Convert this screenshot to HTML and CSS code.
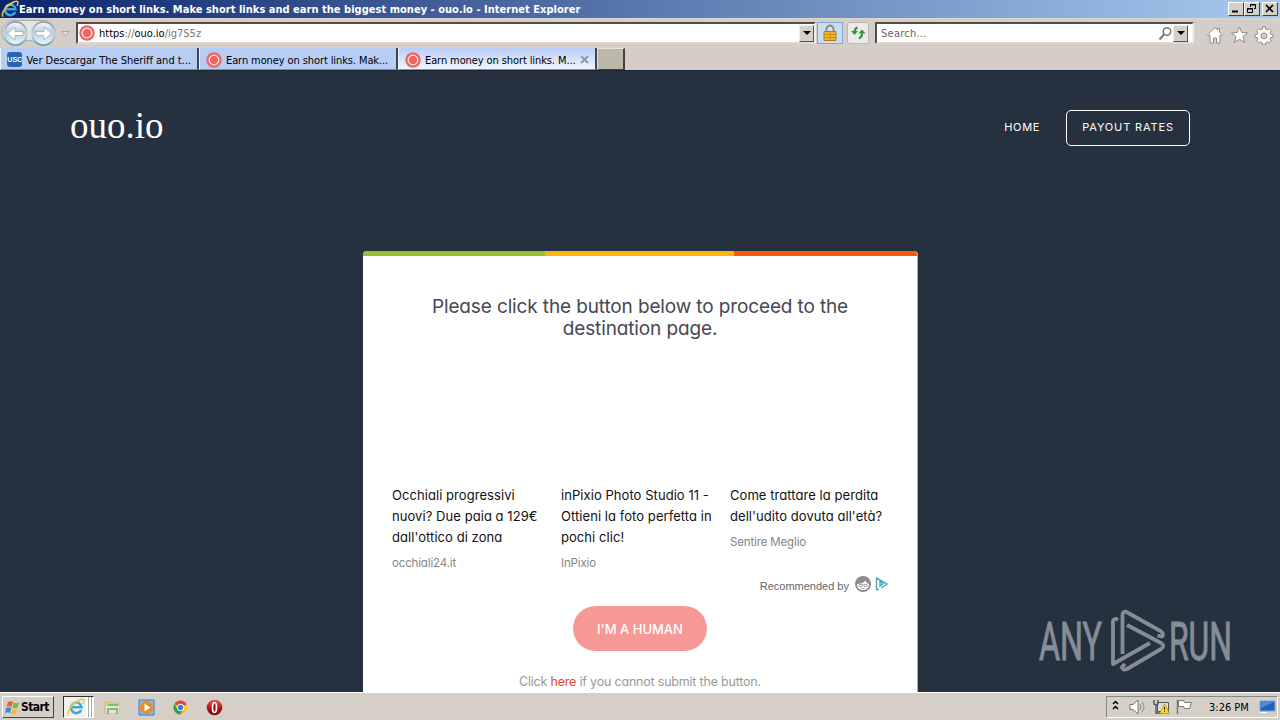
FILE: index.html
```html
<!DOCTYPE html>
<html lang="en">
<head>
    <meta charset="utf-8">
    <meta name="viewport" content="width=device-width, initial-scale=1.0">
    <title>Earn money on short links. Make short links and earn the biggest money - ouo.io</title>
    <link rel="stylesheet" href="styles.css">
</head>
<body>
    <svg width="0" height="0" class="defs">
        <defs>
            <linearGradient id="ring" x2="0" y2="1"><stop stop-color="#8295a6"/><stop offset=".5" stop-color="#c8d4dc"/><stop offset="1" stop-color="#58a5b5"/></linearGradient>
            <linearGradient id="disc" x2="0" y2="1"><stop stop-color="#f8fafc"/><stop offset=".45" stop-color="#bdcad8"/><stop offset="1" stop-color="#eefafe"/></linearGradient>
            <linearGradient id="red" x2="0" y2="1"><stop stop-color="#e55b57"/><stop offset=".5" stop-color="#bb1717"/><stop offset="1" stop-color="#780609"/></linearGradient>
            <symbol id="ie" viewBox="0 0 18 18">
                <path d="M14.200 12A5.300 5.300 0 1 1 14.600 9.300H5.500" fill="none" stroke="#3ba7e2" stroke-width="2.500"/>
                <path d="M4.500 6.500Q7 3.500 11 5" fill="none" stroke="#a5e3fa" stroke-width="1"/>
                <path d="M2.200 16.500C-1 15 4.800 5.500 12.600 2c4.700-2 5.300.5 3.300 4" fill="none" stroke="#efc734" stroke-width="1.500"/>
            </symbol>
            <symbol id="ouo" viewBox="0 0 16 16">
                <circle cx="8" cy="8" r="7.700" fill="#ed6461"/>
                <circle cx="8" cy="8" r="4.800" fill="#ed6461" stroke="#ffe9e5" stroke-width="1.300"/>
            </symbol>
        </defs>
    </svg>

    <div class="titlebar">
        <svg class="title-icon" width="18" height="18"><use href="#ie"/></svg>
        <span class="title-text">Earn money on short links. Make short links and earn the biggest money - ouo.io - Internet Explorer</span>
        <div class="win-btns">
            <span class="win-btn"><svg width="13" height="11"><path d="M3 8.500h6" stroke="#000" stroke-width="2"/></svg></span>
            <span class="win-btn"><svg width="13" height="11"><path d="M5.500 4V1.500h5v4H9M5 2h6M2.500 5.500h5v4h-5zM2 6h6" fill="none" stroke="#000"/></svg></span>
            <span class="win-btn close"><svg width="13" height="11"><path d="M3 2l7 7M10 2L3 9" stroke="#000" stroke-width="1.700"/></svg></span>
        </div>
    </div>

    <div class="navbar">
        <svg class="history" width="72" height="29">
            <path d="M15 1.500h28c10 0 16 11 9 21-5 5-12 5-17 1-4-3-8-3-12 0C13 29 2 24 2 13 2 7 8 1.500 15 1.500" fill="#e2e4e5" stroke="#aaa9ad"/>
            <circle cx="15.500" cy="14.500" r="11.500" fill="url(#disc)" stroke="url(#ring)" stroke-width="1.600"/>
            <circle cx="43.500" cy="14.500" r="11.500" fill="url(#disc)" stroke="url(#ring)" stroke-width="1.600"/>
            <path d="M7.500 14.500l7.500-6.500v4.500h8v4h-8V21zM51.500 14.500L44 8v4.500h-8v4h8V21z" fill="#fff" stroke="#a1adbb" stroke-width=".8"/>
            <path d="M61.500 12.500h8l-4 4z" fill="#e5e0db" stroke="#aaa6a2"/>
        </svg>
        <div class="field address">
            <svg width="16" height="16"><use href="#ouo"/></svg>
            <span class="url">https<i>://</i>ouo.io<i>/ig7S5z</i></span>
            <span class="drop"></span>
        </div>
        <span class="tool lock">
            <svg width="16" height="18"><path d="M4.500 8V5a3.500 3.500 0 0 1 7 0v3" fill="none" stroke="#94866c" stroke-width="1.800"/><path d="M2 7.500h12v9H2z" fill="#efb82b" stroke="#b57b16"/><path d="M2 10.500h12M2 13.500h12M8 8v8" stroke="#cc8d17"/></svg>
        </span>
        <span class="tool refresh">
            <svg width="16" height="16"><path d="M7.500 2.500Q4.500 3.500 4.500 7M9 13.500q3-1 3-5" fill="none" stroke="#2c9637" stroke-width="2"/><path d="M1 6h7l-3.500 4zM8.500 8.500h7L12 4.500z" fill="#2c9637"/></svg>
        </span>
        <div class="field search">
            <span>Search...</span>
            <svg width="15" height="15"><circle cx="9" cy="5.500" r="3.800" fill="none" stroke="#777" stroke-width="1.500"/><path d="M6 8.500l-4.500 5" stroke="#777" stroke-width="2"/></svg>
            <span class="drop"></span>
        </div>
        <svg class="browser-tools" width="68" height="20">
            <g fill="#fff" stroke="#8b8b8b">
                <path d="M1.500 10L9 2.500l2.500 2.500V3.500h2v3.500l3 3-1 1-1.500-1v8h-3.500v-5h-3v5H4v-8l-1.500 1z"/>
                <path d="M33.500 2l2.300 5.500 5.700.3-4.500 3.800 1.700 6-5.200-3.400-5.200 3.400 1.700-6-4.500-3.800 5.700-.3z"/>
                <path d="M56.700 2h2.600l.5 2.200 1.500.7 2-1.200 1.900 1.900-1.200 2 .7 1.500 2.200.5v2.600l-2.200.5-.7 1.500 1.200 2-1.900 1.900-2-1.200-1.500.7-.5 2.200h-2.600l-.5-2.200-1.500-.7-2 1.200-1.900-1.900 1.200-2-.7-1.500-2.200-.5V9.600l2.200-.5.7-1.500-1.200-2 1.900-1.900 2 1.200 1.500-.7z"/>
            </g>
            <circle cx="58" cy="10.900" r="3" fill="#d4d0c8" stroke="#8b8b8b"/>
        </svg>
    </div>

    <div class="tabs">
        <div class="tab"><span class="usc">USC</span><span class="tab-text wide">Ver Descargar The Sheriff and t...</span></div>
        <div class="tab"><svg width="16" height="16"><use href="#ouo"/></svg><span class="tab-text">Earn money on short links. Mak...</span></div>
        <div class="tab active"><svg width="16" height="16"><use href="#ouo"/></svg><span class="tab-text">Earn money on short links. M...</span><svg class="tab-close" width="9" height="9"><path d="M1 1l7 7M8 1L1 8" stroke="#8c98b0" stroke-width="2"/></svg></div>
        <div class="new-tab"></div>
    </div>

    <main class="page">
        <header class="site-header">
            <a class="logo">ouo.io</a>
            <nav>
                <a class="home">HOME</a>
                <a class="rates">PAYOUT RATES</a>
            </nav>
        </header>

        <section class="card">
            <div class="stripes"><span></span><span></span><span></span></div>
            <h1>Please click the button below to proceed to the<br>destination page.</h1>
            <div class="ads">
                <div class="ad">
                    <p>Occhiali progressivi<br>nuovi? Due paia a 129€<br>dall'ottico di zona</p>
                    <small>occhiali24.it</small>
                </div>
                <div class="ad">
                    <p>inPixio Photo Studio 11 -<br>Ottieni la foto perfetta in<br>pochi clic!</p>
                    <small>InPixio</small>
                </div>
                <div class="ad">
                    <p>Come trattare la perdita<br>dell'udito dovuta all'età?</p>
                    <small>Sentire Meglio</small>
                </div>
            </div>
            <div class="recommended">
                <span>Recommended by</span>
                <svg width="34" height="18">
                    <circle cx="9" cy="9" r="8" fill="#8c8c8c"/>
                    <path d="M3 9C7 9 10 7.500 11.500 5.500 12 7.500 13 8.500 15 9c0 4-2.800 6-6 6s-6-2-6-6" fill="#fff"/>
                    <path d="M5 9.500h3v2H5zM10 9.500h3v2h-3zM8 10h2M7 13q2 1.300 4 0" fill="none" stroke="#999" stroke-width=".8"/>
                    <path d="M27 13l6-4-10.500-6v11.500H25M26 6.500v4.500l3-2.200z" fill="none" stroke="#47a9bd" stroke-width="1.400"/>
                </svg>
            </div>
            <button class="human">I'M A HUMAN</button>
            <p class="fallback">Click <a>here</a> if you cannot submit the button.</p>
        </section>

        <svg class="watermark" width="244" height="85">
            <g fill="#aeb5bd" stroke="#aeb5bd" stroke-width="1">
                <text x="3" y="54" textLength="63" lengthAdjust="spacingAndGlyphs">ANY</text>
                <text x="133" y="54" textLength="63" lengthAdjust="spacingAndGlyphs">RUN</text>
            </g>
            <g fill="none" stroke="#aeb5bd" stroke-width="3.800" stroke-linejoin="round">
                <path d="M82 14c-3-2-5-1-5 2v42l37-21"/>
                <path d="M86.500 48V9c0-3 2-4 4-3l34 19c3 2 3 5 1 5.500l-4-1"/>
                <path d="M91 19l34 18c3 2 3 4 0 6L91 63c-3 1.500-5 0-5-2l3-3"/>
            </g>
        </svg>
    </main>

    <footer class="taskbar">
        <div class="start">
            <svg width="15" height="15"><path d="M3 2q2.500-1.500 5 0L6.500 7q-2.500-1.300-5 0z" fill="#e9612b"/><path d="M9 2.500q2.500 1.300 5 0L12.500 7.500q-2.500 1.300-5 0z" fill="#77b941"/><path d="M1.200 8q2.500-1.500 5 0L5 13q-2.500-1.300-5 0z" fill="#3c8bd2"/><path d="M7.200 8.500q2.500 1.300 5 0L11 13.500q-2.500 1.300-5 0z" fill="#f4be2d"/></svg>
            <span>Start</span>
        </div>
        <div class="task-ie"><svg width="18" height="18"><use href="#ie"/></svg></div>
        <div class="quick">
            <svg width="17" height="17"><path d="M1 3h5l1 1h8v10H1z" fill="#eecf6d" stroke="#d1b25c" stroke-width=".7"/><path d="M4 5h10v4H4z" fill="#78bf77"/><path d="M2 7h13v7H2z" fill="#f7e6a5"/><path d="M4 15v-5h9v5" fill="none" stroke="#69b8d5" stroke-width="2"/></svg>
            <svg width="17" height="17"><path d="M1 1h15v15H1z" fill="#8cbae5" stroke="#3f80c1"/><circle cx="8.500" cy="8.500" r="6.500" fill="#f18a1c"/><path d="M6.500 4.500v8l6-4z" fill="#fff"/></svg>
            <svg width="17" height="17"><circle cx="8.500" cy="8.500" r="6.800" fill="#fbc62c"/><path d="M8.500 8.500L2.400 5a7 7 0 0 1 12.300.3z" fill="#dd4837"/><path d="M2.400 5a7 7 0 0 0 6 10.500l3-5.500h-6z" fill="#2da04e"/><circle cx="8.500" cy="8.500" r="3.300" fill="#3c7ed6" stroke="#fff"/></svg>
            <svg width="17" height="17"><circle cx="8.500" cy="8.500" r="7.800" fill="url(#red)"/><ellipse cx="8.500" cy="8.500" rx="2" ry="5" fill="#961014" stroke="#fff" stroke-width="1.700"/></svg>
        </div>
        <div class="tray">
            <svg width="82" height="20">
                <path d="M2 7l2.500-2.500L7 7M2 12l2.500-2.500L7 12" fill="none" stroke="#000" stroke-width="1.500"/>
                <path d="M19 7.500h3l5-4.500v14l-5-4.500h-3z" fill="#fff" stroke="#777"/>
                <path d="M29 7q2 3 0 6M31 5q4 5 0 10" fill="none" stroke="#888"/>
                <path d="M46.500 5.500h11v9h-11z" fill="#ddd" stroke="#555"/>
                <path d="M43 3v4q2 2 4 0V3M45 8v8h6" fill="none" stroke="#555" stroke-width="1.400"/>
                <path d="M53.500 7l5 9.500h-10z" fill="#ffdc28" stroke="#a8820e" stroke-width=".7"/><path d="M53.500 10v3m0 1v1" stroke="#222"/>
                <path d="M66.500 3v14" stroke="#777" stroke-width="1.500"/><path d="M67.500 3.500h5l1 2h7l-2 6h-5l-1-2h-5z" fill="#fff" stroke="#777"/>
            </svg>
            <span class="clock">3:26 PM</span>
            <svg width="17" height="16"><path d="M1 2h15v10H1z" fill="#2262b7" stroke="#76aaeb"/><path d="M2 3h13L2 9z" fill="#4d8bd7"/><path d="M1 13.500h7" stroke="#fff"/></svg>
        </div>
    </footer>
</body>
</html>
```
FILE: styles.css
```css
* {
    margin: 0;
    padding: 0;
    box-sizing: border-box;
}

:root {
    --chrome: #d4d0c8;
    --page: #25313f;
    --ui: "DejaVu Sans Condensed", "DejaVu Sans", sans-serif;
}

body {
    width: 1280px;
    height: 720px;
    display: flex;
    flex-direction: column;
    overflow: hidden;
    background: var(--chrome);
    font-family: var(--ui);
    font-size: 11px;
    font-stretch: condensed;
}

svg {
    flex-shrink: 0;
}

.defs {
    position: absolute;
}

.titlebar {
    height: 18px;
    display: flex;
    align-items: center;
    padding: 0 2px 0 1px;
    background: linear-gradient(90deg, #0c256b, #a6caf0);
    color: #fff;
    font-weight: bold;
}

.title-text {
    flex: 1;
    white-space: nowrap;
    letter-spacing: 0.025px;
}

.win-btns {
    display: flex;
}

.win-btn {
    width: 16px;
    height: 14px;
    background: var(--chrome);
    border: 1px solid;
    border-color: #fff #404040 #404040 #fff;
    display: flex;
}

.close {
    margin-left: 2px;
}

.navbar {
    height: 30px;
    display: flex;
    align-items: flex-start;
    padding: 0 6px 0 0;
    background: #d5cec8;
    border-top: 1px solid #dbd9cf;
}

.history {
    margin-right: 4px;
}

.field {
    height: 22px;
    margin-top: 3px;
    background: #fff;
    border: 2px solid;
    border-color: #544c47 #eee #e1d5d1 #544c47;
    display: flex;
    align-items: center;
}

.address {
    width: 740px;
    padding-left: 1px;
}

.url {
    flex: 1;
    margin: 1px 0 0 4px;
}

.url i {
    font-style: normal;
    color: #777;
}

.drop {
    width: 15px;
    height: 17px;
    background: var(--chrome);
    border: 1px solid;
    border-color: #eee #555 #555 #eee;
    display: flex;
    align-items: center;
    justify-content: center;
}

.drop::before {
    content: "";
    border: 4px solid transparent;
    border-top-color: #000;
    border-bottom: 0;
}

.tool {
    width: 26px;
    height: 22px;
    margin: 3px 0 0 1px;
    display: flex;
    align-items: center;
    justify-content: center;
}

.lock {
    background: #c9def5;
    border: 1px solid #79a8e0;
}

.refresh {
    width: 22px;
    margin-left: 4px;
    background: #ecebe9;
    border: 1px solid #bab8b6;
    border-radius: 3px;
}

.search {
    width: 319px;
    margin-left: 6px;
    padding: 0 4px 0 4px;
    color: #666;
}

.search span:first-child {
    flex: 1;
    margin-top: 1px;
    letter-spacing: 0.25px;
}

.browser-tools {
    margin: 6px 0 0 12px;
}

.tabs {
    height: 23px;
    display: flex;
    align-items: flex-start;
    background: #d5cec8;
    border-bottom: 1px solid #192432;
}

.tab {
    width: 199px;
    height: 22px;
    padding: 2px 6px 0;
    display: flex;
    align-items: center;
    background: #b8cdf4;
    border-left: 1px solid #edf3fc;
    border-right: 2px solid #3e4350;
    border-bottom: 1px solid #8790a1;
}

.active {
    background: linear-gradient(#b9cdf8, #f0f5ff);
}

.tab-text {
    margin: 1px 0 0 4px;
    white-space: nowrap;
    letter-spacing: -0.1px;
}

.tab-text.wide {
    letter-spacing: -0.02px;
}

.tab-close {
    margin-left: auto;
}

.usc {
    width: 16px;
    height: 15px;
    border-radius: 3px;
    background: #2766b4;
    color: #fff;
    font: bold 7px/15px "Liberation Sans", sans-serif;
    text-align: center;
}

.new-tab {
    width: 28px;
    height: 22px;
    background: #bbb7aa;
    border: 1px solid #e7e3db;
    border-right: 2px solid #45413d;
    border-bottom-color: #47433f;
}

.page {
    height: 621px;
    position: relative;
    overflow: hidden;
    background: var(--page);
    font-family: Inter, sans-serif;
    font-feature-settings: "cv11";
    font-stretch: normal;
}

.site-header {
    height: 180px;
    padding: 34px 90px 0 70px;
    display: flex;
    justify-content: space-between;
    align-items: flex-start;
    color: #fff;
}

.logo {
    font: 37px/42px "Liberation Serif", serif;
}

nav {
    display: flex;
    align-items: center;
    margin-top: 5px;
    font-size: 11px;
    letter-spacing: 0.85px;
}

.home {
    margin: -2px 26px 0 0;
    letter-spacing: 0.65px;
}

.rates {
    width: 124px;
    height: 36px;
    border: 1px solid #fff;
    border-radius: 5px;
    line-height: 32px;
    text-align: center;
}

.card {
    width: 555px;
    height: 450px;
    margin-left: 363px;
    background: #fff;
    border-right: 1px solid #aab0b7;
    border-radius: 4px 4px 0 0;
    overflow: hidden;
    display: flex;
    flex-direction: column;
    align-items: center;
}

.stripes {
    width: 100%;
    height: 5px;
    display: grid;
    grid-template-columns: 182px 189px 1fr;
}

.stripes span:nth-child(1) {
    background: #96bd34;
}

.stripes span:nth-child(2) {
    background: #fdb50e;
}

.stripes span:nth-child(3) {
    background: #fa5a0a;
}

h1 {
    margin-top: 40px;
    color: #474853;
    font-size: 19px;
    font-weight: 400;
    line-height: 22px;
    text-align: center;
    letter-spacing: -0.13px;
    white-space: nowrap;
}

.ads {
    width: 496px;
    height: 90px;
    margin-top: 145px;
    display: grid;
    grid-template-columns: 169px 169px 158px;
}

.ad p {
    color: #111;
    font-size: 13px;
    line-height: 21px;
    letter-spacing: 0.06px;
    white-space: nowrap;
}

.ad small {
    display: block;
    margin-top: 7px;
    color: #858585;
    font-size: 11.5px;
    line-height: 17px;
    letter-spacing: -0.15px;
}

.recommended {
    width: 496px;
    height: 18px;
    display: flex;
    justify-content: flex-end;
    align-items: center;
    gap: 5px;
    color: #666;
    font: 11px "Liberation Sans", sans-serif;
}

.recommended span {
    margin-top: 4px;
}

.human {
    width: 134px;
    height: 45px;
    margin-top: 13px;
    flex-shrink: 0;
    border: 0;
    border-radius: 23px;
    background: #f59896;
    color: #fff;
    font: 500 13px Inter, sans-serif;
}

.fallback {
    margin-top: 21px;
    color: #999;
    font-size: 12.5px;
    line-height: 20px;
    letter-spacing: -0.2px;
}

.fallback a {
    color: #e24542;
}

.watermark {
    position: absolute;
    left: 1036px;
    top: 535px;
    overflow: visible;
    opacity: 0.7;
    font: 53px Roboto, sans-serif;
}

.taskbar {
    height: 28px;
    display: flex;
    align-items: center;
    background: #d5cfc8;
    border-top: 1px solid #fff;
    padding: 1px 2px 0;
}

.start {
    width: 52px;
    height: 22px;
    padding-left: 2px;
    display: flex;
    align-items: center;
    gap: 1px;
    border: 1px solid;
    border-color: #fff #444 #444 #fff;
    font-weight: bold;
    font-size: 12px;
    letter-spacing: -0.6px;
}

.task-ie {
    width: 31px;
    height: 22px;
    margin-left: 9px;
    padding: 1px 3px;
    background: linear-gradient(90deg, #f2f0ed 22px, #fff 22px 24px, #aaa 24px 25px, #fff 25px 27px, #aaa 27px 28px, #fff 28px);
    border: 1px solid #fff;
    border-left-color: #333;
    border-top-color: #333;
}

.quick {
    margin-left: 10px;
    display: flex;
    gap: 17px;
}

.tray {
    width: 172px;
    height: 22px;
    margin-left: auto;
    padding: 0 1px 0 4px;
    display: flex;
    align-items: center;
    border: 1px solid;
    border-color: #888 #fff #fff #888;
}

.clock {
    margin-left: 16px;
    margin-right: auto;
}
```
